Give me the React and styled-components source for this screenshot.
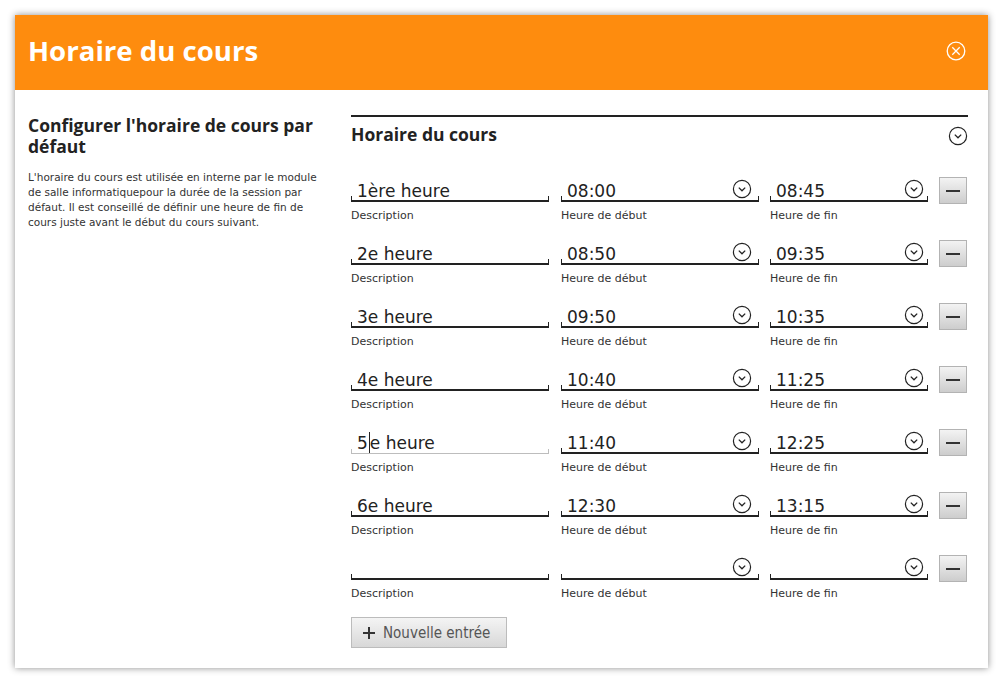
import React from 'react';
import styled, { createGlobalStyle } from 'styled-components';

const GlobalStyle = createGlobalStyle`
  body {
    margin: 0;
    background: #ffffff;
    font-family: "DejaVu Sans", sans-serif;
    color: #222;
  }
`;

// Page & dialog frame
const Page = styled.div`
  padding: 15px;
`;

const Dialog = styled.div`
  width: 973px;
  height: 653px;
  background: #ffffff;
  box-shadow: 0 0 7px rgba(0, 0, 0, 0.45);
  display: flex;
  flex-direction: column;
`;

const Header = styled.div`
  height: 75px;
  box-sizing: border-box;
  background: #fe8c0e;
  display: flex;
  align-items: center;
  justify-content: space-between;
  padding: 0 22px 5px 13px;
`;

const Title = styled.h1`
  margin: 0;
  font-family: "Open Sans", sans-serif;
  font-weight: 700;
  font-size: 27.6px;
  color: #ffffff;
`;

const CloseButton = styled.button`
  border: none;
  background: none;
  padding: 0;
  margin-top: 2px;
  display: flex;
  cursor: pointer;
`;

const Body = styled.div`
  display: flex;
  padding: 25px 20px 0 13px;
`;

// Left column
const Aside = styled.div`
  width: 302px;
  margin-right: 21px;
`;

const AsideTitle = styled.h2`
  margin: 0 0 13px;
  font-family: "Open Sans", sans-serif;
  font-weight: 700;
  font-size: 17.5px;
  line-height: 21px;
  color: #222;
`;

const AsideText = styled.p`
  margin: 0;
  font-size: 10.5px;
  line-height: 15px;
  color: #333;
`;

// Right column
const Main = styled.div`
  flex: 1;
  border-top: 2px solid #222;
`;

const SectionHead = styled.div`
  height: 44px;
  box-sizing: border-box;
  display: flex;
  align-items: flex-start;
  justify-content: space-between;
  padding-top: 6px;
  margin-bottom: 15px;
`;

const SectionTitle = styled.h3`
  margin: 0;
  font-family: "Open Sans", sans-serif;
  font-weight: 700;
  font-size: 17.5px;
  line-height: 22px;
  color: #222;
`;

const HeadIcon = styled.span`
  display: flex;
  margin-top: 3px;
`;

const Row = styled.div`
  display: grid;
  grid-template-columns: 199px 198px 158px 28px;
  column-gap: 11px;
  height: 63px;
`;

const Field = styled.div`
  display: flex;
  flex-direction: column;
`;

const InputBox = styled.div`
  position: relative;
  height: 26px;
  display: flex;
  align-items: center;
  justify-content: space-between;
  padding: 0 ${({ $padRight = 7 }) => $padRight}px 0 6px;
  margin-right: ${({ $trim = 0 }) => $trim}px;
  font-size: 17px;
  color: #222;

  &::after {
    content: '';
    position: absolute;
    left: 0;
    right: 0;
    bottom: 0;
    height: 4px;
    border-style: solid;
    border-color: ${({ $active }) => ($active ? '#bdbdbd' : '#222')};
    border-width: 0 1px ${({ $active }) => ($active ? '1px' : '2px')} 1px;
  }
`;

const Value = styled.span`
  display: flex;
  align-items: center;
  padding-top: 4px;
`;

const Caret = styled.span`
  display: inline-block;
  width: 1px;
  height: 22px;
  background: #222;
  margin: 0 0 0 1px;
`;

const Label = styled.div`
  font-size: 11px;
  line-height: 14px;
  padding-top: 7px;
  color: #333;
`;

const MinusButton = styled.button`
  width: 28px;
  height: 27px;
  margin-top: 1px;
  padding: 0;
  border: 1px solid #b3b3b3;
  background: linear-gradient(#f3f3f3, #cdcdcd);
  display: flex;
  align-items: center;
  justify-content: center;
  cursor: pointer;

  &::before {
    content: '';
    width: 14px;
    height: 2px;
    background: #333;
  }
`;

const AddButton = styled.button`
  width: 156px;
  height: 31px;
  display: flex;
  align-items: center;
  gap: 7px;
  padding: 0 0 0 10px;
  border: 1px solid #bcbcbc;
  background: linear-gradient(#f4f4f4, #d8d8d8);
  font-family: "DejaVu Sans Condensed", "DejaVu Sans", sans-serif;
  font-size: 15px;
  color: #555;
  cursor: pointer;
`;

const ChevronCircle = ({ color = '#222', size = 20 }) => (
  <svg width={size} height={size} viewBox="0 0 20 20" fill="none">
    <circle cx="10" cy="10" r="8.6" stroke={color} strokeWidth="1.2" />
    <polyline points="6.8,8.6 10,11.8 13.2,8.6" stroke={color} strokeWidth="1.3" fill="none" />
  </svg>
);

const CloseIcon = () => (
  <svg width="20" height="20" viewBox="0 0 20 20" fill="none">
    <circle cx="10" cy="10" r="8.8" stroke="#fff" strokeWidth="1.3" />
    <path d="M6.3 6.3 L13.7 13.7 M13.7 6.3 L6.3 13.7" stroke="#fff" strokeWidth="1.3" />
  </svg>
);

const PlusIcon = () => (
  <svg width="14" height="14" viewBox="0 0 14 14">
    <path d="M7 1 V13 M1 7 H13" stroke="#333" strokeWidth="2" />
  </svg>
);

const schedule = [
  { desc: '1ère heure', start: '08:00', end: '08:45' },
  { desc: '2e heure', start: '08:50', end: '09:35' },
  { desc: '3e heure', start: '09:50', end: '10:35' },
  { desc: '4e heure', start: '10:40', end: '11:25' },
  { desc: '5e heure', start: '11:40', end: '12:25', active: true },
  { desc: '6e heure', start: '12:30', end: '13:15' },
  { desc: '', start: '', end: '' },
];

const TimeField = ({ value, label, padRight }) => (
  <Field>
    <InputBox $padRight={padRight}>
      <Value>{value}</Value>
      <ChevronCircle />
    </InputBox>
    <Label>{label}</Label>
  </Field>
);

const App = () => {
  return (
    <Page>
      <GlobalStyle />
      <Dialog>
        <Header>
          <Title>Horaire du cours</Title>
          <CloseButton aria-label="Fermer">
            <CloseIcon />
          </CloseButton>
        </Header>

        <Body>
          <Aside>
            <AsideTitle>Configurer l'horaire de cours par défaut</AsideTitle>
            <AsideText>
              L'horaire du cours est utilisée en interne par le module de salle informatiquepour la durée de la
              session par défaut. Il est conseillé de définir une heure de fin de cours juste avant le début du
              cours suivant.
            </AsideText>
          </Aside>

          <Main>
            <SectionHead>
              <SectionTitle>Horaire du cours</SectionTitle>
              <HeadIcon>
                <ChevronCircle />
              </HeadIcon>
            </SectionHead>

            {schedule.map((row, i) => (
              <Row key={i}>
                <Field>
                  <InputBox $active={row.active} $trim={1}>
                    <Value>
                      {row.active ? (
                        <>
                          5<Caret />e heure
                        </>
                      ) : (
                        row.desc
                      )}
                    </Value>
                  </InputBox>
                  <Label>Description</Label>
                </Field>
                <TimeField value={row.start} label="Heure de début" padRight={7} />
                <TimeField value={row.end} label="Heure de fin" padRight={4} />
                <MinusButton aria-label="Supprimer" />
              </Row>
            ))}

            <AddButton>
              <PlusIcon />
              Nouvelle entrée
            </AddButton>
          </Main>
        </Body>
      </Dialog>
    </Page>
  );
};

export default App;
